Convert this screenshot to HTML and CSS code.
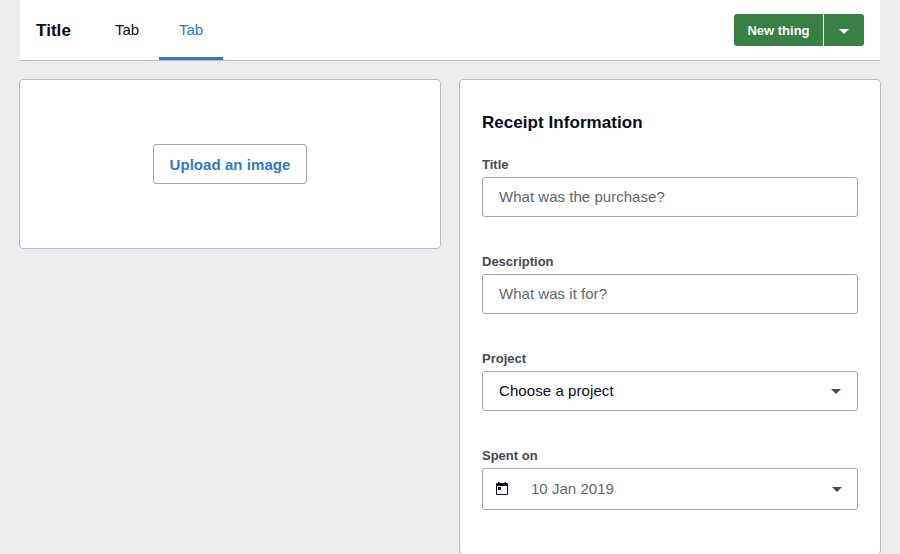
FILE: index.html
```
<!DOCTYPE html>
<html lang="en">
<head>
<meta charset="utf-8">
<title>Receipt</title>
<link rel="stylesheet" href="styles.css">
</head>
<body>
<header class="bar">
  <h1 class="bar-title">Title</h1>
  <nav class="tabs">
    <a class="tab">Tab</a>
    <a class="tab active">Tab</a>
  </nav>
  <div class="split">
    <button class="split-main">New thing</button>
    <button class="split-more" aria-label="More"><svg width="10" height="5" viewBox="0 0 10 5"><path d="M0 0h10L5 5z" fill="currentColor"/></svg></button>
  </div>
</header>
<main class="columns">
  <section class="card upload">
    <button class="upload-btn">Upload an image</button>
  </section>
  <section class="card form">
    <h2>Receipt Information</h2>
    <div class="field">
      <div class="label">Title</div>
      <div class="control">What was the purchase?</div>
    </div>
    <div class="field">
      <div class="label">Description</div>
      <div class="control">What was it for?</div>
    </div>
    <div class="field">
      <div class="label">Project</div>
      <div class="control select"><span>Choose a project</span><svg class="caret" width="10" height="5" viewBox="0 0 10 5"><path d="M0 0h10L5 5z" fill="currentColor"/></svg></div>
    </div>
    <div class="field">
      <div class="label">Spent on</div>
      <div class="control date">
        <svg class="cal" width="12" height="13" viewBox="0 0 12 13"><path fill="currentColor" fill-rule="evenodd" d="M2 0h1.5v1h5V0H10v1h1a1 1 0 0 1 1 1v10a1 1 0 0 1-1 1H1a1 1 0 0 1-1-1V2a1 1 0 0 1 1-1h1zM1 4v8h10V4zM2 5h3v3H2z"/></svg>
        <span>10 Jan 2019</span>
        <svg class="caret" width="10" height="5" viewBox="0 0 10 5"><path d="M0 0h10L5 5z" fill="currentColor"/></svg>
      </div>
    </div>
  </section>
</main>
</body>
</html>
```
FILE: styles.css
```
* {
  box-sizing: border-box;
}

body {
  margin: 0;
  padding: 0 20px;
  height: 554px;
  overflow: hidden;
  background: #ebecee;
  color: #060b1e;
  font: 15px/20px "Liberation Sans", Arial, sans-serif;
}

button {
  margin: 0;
  padding: 0;
  border: 0;
  font-family: inherit;
}

.bar {
  display: flex;
  align-items: center;
  height: 61px;
  padding-right: 16px;
  background: #fff;
  border-bottom: 1px solid #b9bbc1;
}

.bar-title {
  width: 75px;
  margin: 0;
  padding: 2px 0 0 16px;
  font-size: 17px;
  line-height: 20px;
  letter-spacing: 0.05px;
}

.tabs {
  display: flex;
  height: 60px;
}

.tab {
  width: 64px;
  line-height: 60px;
  text-align: center;
}

.active {
  color: #3079c6;
  box-shadow: inset 0 -3px #3079c6;
}

.split {
  display: flex;
  gap: 1px;
  margin-left: auto;
}

.split button {
  height: 32px;
  background: #388043;
  color: #fff;
}

.split .split-main {
  width: 89px;
  border-radius: 3px 0 0 3px;
  font-size: 13px;
  font-weight: bold;
}

.split .split-more {
  display: flex;
  align-items: center;
  justify-content: center;
  width: 40px;
  padding-top: 2px;
  border-radius: 0 3px 3px 0;
}

.columns {
  display: grid;
  grid-template-columns: 1fr 1fr;
  align-items: start;
  gap: 18px;
  margin: 18px -1px 0;
}

.card {
  background: #fff;
  border: 1px solid #b9bbc1;
  border-radius: 4px;
}

.upload {
  display: flex;
  align-items: center;
  justify-content: center;
  height: 170px;
}

.upload-btn {
  width: 154px;
  height: 40px;
  background: #fff;
  border: 1px solid #a4a5ae;
  border-radius: 3px;
  color: #3079c6;
  font-size: 15px;
  font-weight: bold;
  letter-spacing: 0.06px;
}

.form {
  height: 476px;
  padding: 33px 22px 0;
}

h2 {
  margin: 0 0 23px;
  font-size: 17px;
  line-height: 20px;
  letter-spacing: 0.05px;
}

.field {
  margin-bottom: 36px;
}

.label {
  height: 21px;
  color: #434a59;
  font-size: 13px;
  font-weight: bold;
  line-height: 17px;
}

.control {
  display: flex;
  align-items: center;
  height: 40px;
  padding: 0 16px;
  border: 1px solid #a4a5ae;
  border-radius: 3px;
  color: #62656e;
  letter-spacing: 0.03px;
}

.select {
  color: #060b1e;
  letter-spacing: 0.08px;
}

.date {
  height: 42px;
  padding: 0 15px 0 13px;
}

.caret {
  margin-left: auto;
  color: #434a59;
}

.cal {
  margin: 0 23px 1px 0;
  color: #060b1e;
}
```
